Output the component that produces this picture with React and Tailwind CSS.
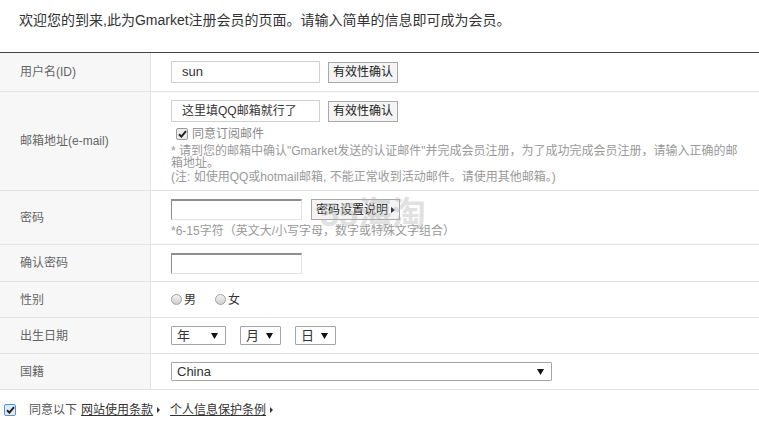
import React from "react";

const font = "font-['Liberation_Sans','Noto_Sans_CJK_SC',sans-serif]";

function Check({ blue }) {
  return (
    <span
      className={`inline-flex w-[12px] h-[12px] items-center justify-center rounded-[2px] border ${
        blue ? "border-[#5b8fd6] bg-[#dfe9f7]" : "border-[#9a9a9a] bg-[#ececec]"
      }`}
    >
      <svg width="9" height="8" viewBox="0 0 9 8">
        <path d="M1 4.2 L3.4 6.6 L8 1.2" stroke="#222" strokeWidth="2" fill="none" />
      </svg>
    </span>
  );
}

function Radio() {
  return (
    <span className="inline-block w-[11px] h-[11px] rounded-full border border-[#a0a0a0] bg-gradient-to-b from-[#f4f4f4] to-[#cfcfcf]" />
  );
}

function Arrow() {
  return (
    <svg width="7" height="6" viewBox="0 0 7 6">
      <path d="M0 0 H7 L3.5 6 Z" fill="#111" />
    </svg>
  );
}

function Select({ label, w }) {
  return (
    <div
      className={`${w} h-[19px] flex items-center justify-between border border-[#a5a5a5] rounded-[1px] bg-white pl-[5px] pr-[7px] text-[13px] leading-[17px] text-[#333]`}
    >
      <span>{label}</span>
      <Arrow />
    </div>
  );
}

function Row({ label, h, top, children }) {
  return (
    <div className={`flex ${h} border-b border-[#e3e3e3]`}>
      <div className="w-[151px] shrink-0 bg-[#f7f7f7] border-r border-[#e3e3e3] flex items-center pl-[20px] text-[12px] text-[#666]">
        {label}
      </div>
      <div className={`flex-1 pl-[20px] ${top ? "pt-[8px]" : "flex items-center"}`}>
        {children}
      </div>
    </div>
  );
}

function Btn({ children }) {
  return (
    <span className="inline-flex items-center h-[21px] px-[4px] border border-[#a8a8a8] bg-[#f4f4f4] text-[12px] text-[#222]">
      {children}
    </span>
  );
}

export default function App() {
  return (
    <div className={`relative w-[759px] h-[432px] bg-white ${font}`}>
      <div className="h-[52px] pt-[10px] pl-[19px] text-[14px] leading-[20px] text-[#333]">
        欢迎您的到来,此为Gmarket注册会员的页面。请输入简单的信息即可成为会员。
      </div>
      <div className="border-t border-[#444]">
        <Row label="用户名(ID)" h="h-[39px]">
          <div className="flex items-center gap-[8px]">
            <div className="w-[149px] h-[22px] border border-[#d0d0d0] pl-[10px] text-[13px] leading-[20px] text-[#333]">
              sun
            </div>
            <Btn>有效性确认</Btn>
          </div>
        </Row>
        <Row label="邮箱地址(e-mail)" h="h-[99px]" top>
          <div className="flex items-center gap-[8px]">
            <div className="w-[149px] h-[22px] border border-[#d0d0d0] pl-[10px] text-[12px] leading-[20px] text-[#333]">
              这里填QQ邮箱就行了
            </div>
            <Btn>有效性确认</Btn>
          </div>
          <div className="flex items-center gap-[4px] mt-[5px] pl-[5px] text-[12px] leading-[14px] text-[#888]">
            <Check />
            <span>同意订阅邮件</span>
          </div>
          <div className="mt-[4px] text-[12px] leading-[12px] text-[#999]">
            * 请到您的邮箱中确认"Gmarket发送的认证邮件"并完成会员注册，为了成功完成会员注册，请输入正确的邮
            <br />
            箱地址。
          </div>
          <div className="mt-[1px] text-[12px] leading-[14px] text-[#999]">
            (注: 如使用QQ或hotmail邮箱, 不能正常收到活动邮件。请使用其他邮箱。)
          </div>
        </Row>
        <Row label="密码" h="h-[54px]" top>
          <div className="flex items-center gap-[9px]">
            <div className="w-[131px] h-[21px] border border-[#e3e3e3] border-t-[#8f8f8f] border-l-[#8f8f8f] border-t-2" />
            <span className="inline-flex items-center gap-[3px] h-[21px] px-[4px] border border-[#a8a8a8] bg-[#f4f4f4] text-[12px] text-[#222]">
              密码设置说明
              <svg width="4" height="6" viewBox="0 0 4 6">
                <path d="M0 0 L4 3 L0 6 Z" fill="#333" />
              </svg>
            </span>
          </div>
          <div className="mt-[3px] text-[12px] leading-[16px] text-[#999]">
            *6-15字符（英文大/小写字母，数字或特殊文字组合）
          </div>
        </Row>
        <Row label="确认密码" h="h-[37px]">
          <div className="w-[131px] h-[21px] border border-[#e3e3e3] border-t-[#8f8f8f] border-l-[#8f8f8f] border-t-2" />
        </Row>
        <Row label="性别" h="h-[36px]">
          <div className="flex items-center text-[12px] text-[#333]">
            <Radio />
            <span className="ml-[2px]">男</span>
            <span className="ml-[19px] flex">
              <Radio />
            </span>
            <span className="ml-[2px]">女</span>
          </div>
        </Row>
        <Row label="出生日期" h="h-[36px]">
          <div className="flex items-center gap-[14px]">
            <Select label="年" w="w-[55px]" />
            <Select label="月" w="w-[41px]" />
            <Select label="日" w="w-[41px]" />
          </div>
        </Row>
        <Row label="国籍" h="h-[36px]">
          <Select label="China" w="w-[381px]" />
        </Row>
      </div>
      <div className="flex items-center pl-[4px] pt-[12px] text-[12px] leading-[16px]">
        <Check blue />
        <span className="ml-[13px] text-[#555]">同意以下</span>
        <span className="ml-[4px] underline text-[#333]">网站使用条款</span>
        <svg className="ml-[4px]" width="3" height="6" viewBox="0 0 3 6">
          <path d="M0 0 L3 3 L0 6 Z" fill="#333" />
        </svg>
        <span className="ml-[10px] underline text-[#333]">个人信息保护条例</span>
        <svg className="ml-[4px]" width="3" height="6" viewBox="0 0 3 6">
          <path d="M0 0 L3 3 L0 6 Z" fill="#333" />
        </svg>
      </div>
      <div className="absolute left-[320px] top-[194px] pointer-events-none text-[34px] leading-[40px] font-bold text-[#b5b5b5] opacity-40">
        55海淘
      </div>
    </div>
  );
}
